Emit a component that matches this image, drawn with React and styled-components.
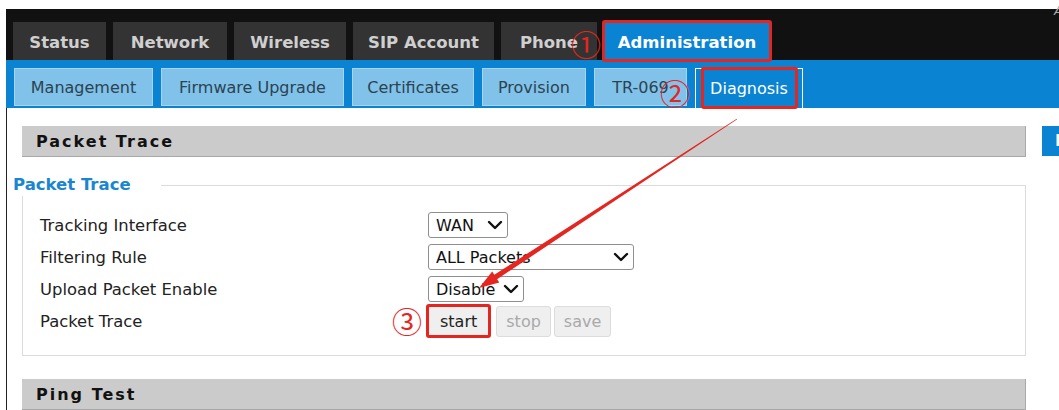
import styled, { createGlobalStyle, css } from "styled-components";
import { ChevronDown } from "lucide-react";

const RED = "#e5251f";
const BLUE = "#0a83d3";

const GlobalStyle = createGlobalStyle`
  html, body {
    margin: 0;
    padding: 0;
    background: #fff;
  }
  body {
    font-family: "DejaVu Sans", Verdana, sans-serif;
    overflow: hidden;
  }
`;

// red highlight frame drawn over a tab or button
const markBox = (inset) => css`
  &::after {
    content: "";
    position: absolute;
    inset: ${inset};
    border: 3px solid ${RED};
    border-radius: 3px;
    pointer-events: none;
  }
`;

const Page = styled.div`
  position: relative;
  width: 1059px;
  height: 410px;
  padding: 9px 0 0 6px;
  box-sizing: border-box;
  overflow: hidden;
`;

const TopBar = styled.div`
  display: flex;
  align-items: flex-end;
  gap: 7px;
  height: 51px;
  padding-left: 7px;
  background: #111;
`;

const MainTab = styled.div`
  position: relative;
  display: flex;
  align-items: center;
  justify-content: center;
  width: ${(p) => p.$w}px;
  height: 38px;
  padding-top: 3px;
  box-sizing: border-box;
  background: ${(p) => (p.$active ? BLUE : "#333")};
  color: ${(p) => (p.$active ? "#fff" : "#cfcfcf")};
  font-size: 16.5px;
  font-weight: bold;
  ${(p) => p.$marked && markBox("-2px")}
`;

const Corner = styled.span`
  margin-left: auto;
  align-self: flex-start;
  margin-top: -6px;
  margin-right: -4px;
  font-size: 13px;
  font-style: italic;
  color: #aaa;
`;

const SubBar = styled.div`
  display: flex;
  align-items: flex-start;
  gap: 8px;
  height: 48px;
  padding: 8px 0 0 8px;
  box-sizing: border-box;
  background: ${BLUE};
`;

const SubTab = styled.div`
  position: relative;
  display: flex;
  align-items: center;
  justify-content: center;
  width: ${(p) => p.$w}px;
  height: ${(p) => (p.$active ? "40px" : "38px")};
  box-sizing: border-box;
  background: ${(p) => (p.$active ? BLUE : "#80c2ea")};
  border: 1px solid ${(p) => (p.$active ? "#fff" : "#a6d5f2")};
  border-bottom: ${(p) => (p.$active ? "none" : "1px solid #a6d5f2")};
  color: ${(p) => (p.$active ? "#fff" : "#2c4350")};
  font-size: 16px;
  ${(p) => p.$marked && markBox("-2px 4px -1px 5px")}
`;

const Body = styled.div`
  display: flex;
  gap: 16px;
  min-height: 302px;
  padding: 18px 0 0 15px;
  border-left: 1px solid #222;
  box-sizing: border-box;
`;

const Main = styled.div`
  width: 1004px;
  flex-shrink: 0;
`;

const Side = styled.div`
  flex-shrink: 0;
  width: 80px;
`;

const SideButton = styled.div`
  height: 30px;
  line-height: 30px;
  padding-left: 13px;
  background: ${BLUE};
  color: #fff;
  font-size: 16px;
  font-weight: bold;
`;

const SectionBar = styled.div`
  height: 30px;
  line-height: 31px;
  padding-left: 14px;
  background: #cbcbcb;
  border-right: 1px solid #a8a8a8;
  border-bottom: 1px solid #a8a8a8;
  color: #111;
  font-size: 16px;
  font-weight: bold;
  letter-spacing: 2px;
  margin-top: ${(p) => p.$gap || 0}px;
`;

const Group = styled.div`
  margin-top: 17px;
`;

const LegendRow = styled.div`
  display: flex;
  height: 22px;
`;

const Legend = styled.span`
  margin-left: -9px;
  line-height: 22px;
  color: #1a86d0;
  font-size: 16.5px;
  font-weight: bold;
`;

const Rule = styled.div`
  flex: 1;
  align-self: flex-end;
  height: 10px;
  margin-left: 30px;
  border-top: 1px solid #dcdcdc;
  border-right: 1px solid #dcdcdc;
`;

const Fields = styled.div`
  display: grid;
  grid-template-columns: 388px 1fr;
  grid-auto-rows: 32px;
  align-items: center;
  padding: 13px 0 18px 17px;
  border: 1px solid #dcdcdc;
  border-top: none;
`;

const Label = styled.span`
  color: #222;
  font-size: 16.4px;
`;

const Cell = styled.div`
  display: flex;
  align-items: center;
  gap: 3px;
`;

const SelectWrap = styled.span`
  position: relative;
  display: inline-flex;
  width: ${(p) => p.$width}px;
  height: 26px;

  svg {
    position: absolute;
    right: 1px;
    top: 1px;
    pointer-events: none;
  }
`;

const Select = styled.select`
  appearance: none;
  width: 100%;
  height: 100%;
  padding: 0 0 0 7px;
  border: 1px solid #8f8f8f;
  border-radius: 3px;
  background: #fff;
  color: #111;
  font-family: "DejaVu Sans", Verdana, sans-serif;
  font-size: 16px;
`;

const Button = styled.button`
  position: relative;
  height: 31px;
  padding: 0 9px;
  border: 1px solid #dcdcdc;
  border-radius: 3px;
  background: #efefef;
  color: ${(p) => (p.disabled ? "#a9a9a9" : "#222")};
  font-family: "DejaVu Sans", Verdana, sans-serif;
  font-size: 16px;
  ${(p) => p.$marked && css`
    padding: 0 11px;
    margin-right: 4px;
    ${markBox("-3px -3px -2px -3px")}
  `}
`;

const Badge = styled.span`
  position: absolute;
  top: ${(p) => p.$top}px;
  left: ${(p) => p.$left}px;
  color: ${RED};
  font-family: "Noto Sans CJK SC", sans-serif;
  font-size: 30px;
  line-height: 1;
  pointer-events: none;
`;

const Overlay = styled.svg`
  position: absolute;
  inset: 0;
  pointer-events: none;
`;

const tabs = [
  ["Status", 93],
  ["Network", 114],
  ["Wireless", 112],
  ["SIP Account", 141],
  ["Phone", 96],
  ["Administration", 166],
];

const subTabs = [
  ["Management", 139],
  ["Firmware Upgrade", 183],
  ["Certificates", 122],
  ["Provision", 104],
  ["TR-069", 93],
  ["Diagnosis", 108],
];

function Dropdown({ width, options }) {
  return (
    <SelectWrap $width={width}>
      <Select defaultValue={options[0]}>
        {options.map((o) => (
          <option key={o}>{o}</option>
        ))}
      </Select>
      <ChevronDown size={24} strokeWidth={2.4} color="#111" />
    </SelectWrap>
  );
}

export default function App() {
  return (
    <Page>
      <GlobalStyle />
      <TopBar>
        {tabs.map(([t, w]) => (
          <MainTab
            key={t}
            $w={w}
            $active={t === "Administration"}
            $marked={t === "Administration"}
          >
            {t}
          </MainTab>
        ))}
        <Corner>A</Corner>
      </TopBar>
      <SubBar>
        {subTabs.map(([t, w]) => (
          <SubTab key={t} $w={w} $active={t === "Diagnosis"} $marked={t === "Diagnosis"}>
            {t}
          </SubTab>
        ))}
      </SubBar>
      <Body>
        <Main>
          <SectionBar>Packet Trace</SectionBar>
          <Group>
            <LegendRow>
              <Legend>Packet Trace</Legend>
              <Rule />
            </LegendRow>
            <Fields>
              <Label>Tracking Interface</Label>
              <Cell>
                <Dropdown width={80} options={["WAN", "LAN"]} />
              </Cell>
              <Label>Filtering Rule</Label>
              <Cell>
                <Dropdown width={206} options={["ALL Packets", "TCP", "UDP"]} />
              </Cell>
              <Label>Upload Packet Enable</Label>
              <Cell>
                <Dropdown width={96} options={["Disable", "Enable"]} />
              </Cell>
              <Label>Packet Trace</Label>
              <Cell>
                <Button $marked>start</Button>
                <Button disabled>stop</Button>
                <Button disabled>save</Button>
              </Cell>
            </Fields>
          </Group>
          <SectionBar $gap={23}>Ping Test</SectionBar>
        </Main>
        <Side>
          <SideButton>Help</SideButton>
        </Side>
      </Body>

      <Badge $top={28} $left={571}>①</Badge>
      <Badge $top={77} $left={660}>②</Badge>
      <Badge $top={305} $left={392}>③</Badge>

      <Overlay width="1059" height="410" viewBox="0 0 1059 410">
        <polygon
          fill={RED}
          points="479,288 499.3,282.5 497.1,279.2 737.2,119.3 736.8,118.7 494.3,274.8 492.2,271.6"
        />
      </Overlay>
    </Page>
  );
}
